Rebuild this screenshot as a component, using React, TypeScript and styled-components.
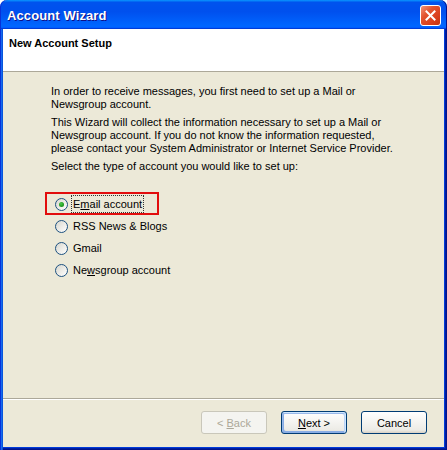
import React from "react";
import styled, { createGlobalStyle } from "styled-components";

const Global = createGlobalStyle`
  html, body { margin: 0; padding: 0; background: #ffffff; }
  body { font-family: "Liberation Sans", Arial, sans-serif; font-size: 11px; }
  * { box-sizing: border-box; }
`;

const Window = styled.div`
  width: 447px;
  height: 450px;
  display: flex;
  flex-direction: column;
`;

const TitleBar = styled.div`
  height: 29px;
  flex: 0 0 29px;
  display: flex;
  align-items: center;
  justify-content: space-between;
  padding: 0 6px 0 7px;
  border-radius: 7px 7px 0 0;
  background: linear-gradient(
    180deg,
    #0997ff,
    #0053ee 8%,
    #0050ee 40%,
    #06f 88%,
    #06f 93%,
    #005bff 95%,
    #003dd7 96%,
    #003dd7
  );
  box-shadow: inset 1px 0 #0831d9, inset -1px 0 #00138c;
`;

const Title = styled.span`
  color: #ffffff;
  font-family: "Liberation Sans", Arial, sans-serif;
  font-weight: bold;
  font-size: 13px;
  letter-spacing: 0.1px;
  text-shadow: 1px 1px #0f1089;
  margin-top: 1px;
`;

const CloseButton = styled.div`
  width: 21px;
  height: 21px;
  margin-top: 1px;
  border: 1px solid #ffffff;
  border-radius: 3px;
  background: linear-gradient(135deg, #f3947a 0%, #e2532f 35%, #d93f1d 70%, #c3330f 100%);
  display: flex;
  align-items: center;
  justify-content: center;
`;

const Frame = styled.div`
  flex: 1;
  display: flex;
  flex-direction: column;
  padding: 0 3px 3px 3px;
  background: #ece9d8;
  box-shadow: inset 1px 0 #0831d9, inset 2px 0 #166aee, inset 3px 0 #0855dd,
    inset -1px -1px #00138c, inset -2px -2px #001ea0, inset -3px -3px #003bda;
`;

const Header = styled.div`
  height: 43px;
  flex: 0 0 43px;
  background: #ffffff;
  border-bottom: 1px solid #aca899;
  padding: 8px 0 0 6px;
`;

const HeaderTitle = styled.div`
  font-weight: bold;
  font-size: 11px;
  line-height: 13px;
  color: #000;
`;

const Content = styled.div`
  flex: 1;
  display: flex;
  flex-direction: column;
  padding: 13px 0 0 48px;
  color: #000;
`;

const Para = styled.p<{ $gap?: number }>`
  margin: ${(p) => p.$gap ?? 0}px 0 0 0;
  line-height: 13px;
  font-size: 11px;
`;

const RadioList = styled.div`
  display: flex;
  flex-direction: column;
  margin-top: 20px;
`;

const RadioRow = styled.div`
  position: relative;
  height: 22px;
  display: flex;
  align-items: center;
`;

const Highlight = styled.div`
  position: absolute;
  left: -6px;
  top: -1px;
  width: 114px;
  height: 23px;
  border: 2px solid #e20d0d;
  pointer-events: none;
`;

const RadioCircle = styled.span<{ $checked?: boolean }>`
  width: 13px;
  height: 13px;
  margin-left: 4px;
  border-radius: 50%;
  border: 1px solid #1c5180;
  background: linear-gradient(135deg, #d6d6ce 0%, #ecebe6 50%, #ffffff 100%);
  display: flex;
  align-items: center;
  justify-content: center;
  &::after {
    content: "";
    display: ${(p) => (p.$checked ? "block" : "none")};
    width: 5px;
    height: 5px;
    border-radius: 50%;
    background: radial-gradient(circle at 40% 35%, #4cc94c, #1e9a1e 60%, #137f13);
  }
`;

const RadioLabel = styled.span<{ $focused?: boolean }>`
  margin-left: 3px;
  height: 18px;
  padding: 0 1px;
  display: flex;
  align-items: center;
  font-size: 11px;
  border: 1px dotted ${(p) => (p.$focused ? "#333" : "transparent")};
  u {
    text-decoration: underline;
  }
`;

const Separator = styled.div`
  height: 2px;
  flex: 0 0 2px;
  border-top: 1px solid #aca899;
  border-bottom: 1px solid #ffffff;
`;

const ButtonBar = styled.div`
  flex: 0 0 47px;
  display: flex;
  justify-content: flex-end;
  align-items: flex-start;
  gap: 14px;
  padding: 11px 17px 0 0;
`;

const Button = styled.button<{ $default?: boolean }>`
  width: 66px;
  height: 23px;
  padding: 0;
  font-family: "Liberation Sans", Arial, sans-serif;
  font-size: 11px;
  color: #000;
  border: 1px solid #003c74;
  border-radius: 3px;
  background: linear-gradient(180deg, #ffffff, #ecebe5 86%, #d8d0c4);
  box-shadow: ${(p) =>
    p.$default
      ? "inset -1px 1px #cee7ff, inset 1px 2px #98b8ea, inset -2px 2px #bcd4f6, inset 1px -1px #89ade4, inset 2px -2px #89ade4"
      : "none"};
  &:disabled {
    background: #f4f4f0;
    border-color: #c9c7ba;
    color: #aca899;
  }
  u {
    text-decoration: underline;
  }
`;

const options = [
  { key: "email", label: <>E<u>m</u>ail account</>, checked: true },
  { key: "rss", label: <>RSS News &amp; Blogs</> },
  { key: "gmail", label: <>Gmail</> },
  { key: "news", label: <>Ne<u>w</u>sgroup account</> },
];

export default function App() {
  return (
    <>
      <Global />
      <Window>
        <TitleBar>
          <Title>Account Wizard</Title>
          <CloseButton>
            <svg width="11" height="11" viewBox="0 0 11 11">
              <path d="M1.5 1.5 L9.5 9.5 M9.5 1.5 L1.5 9.5" stroke="#fff" strokeWidth="2" strokeLinecap="square" />
            </svg>
          </CloseButton>
        </TitleBar>
        <Frame>
          <Header>
            <HeaderTitle>New Account Setup</HeaderTitle>
          </Header>
          <Content>
            <Para>
              In order to receive messages, you first need to set up a Mail or
              <br />
              Newsgroup account.
            </Para>
            <Para $gap={5}>
              This Wizard will collect the information necessary to set up a Mail or
              <br />
              Newsgroup account. If you do not know the information requested,
              <br />
              please contact your System Administrator or Internet Service Provider.
            </Para>
            <Para $gap={5}>Select the type of account you would like to set up:</Para>
            <RadioList>
              {options.map((o) => (
                <RadioRow key={o.key}>
                  {o.checked && <Highlight />}
                  <RadioCircle $checked={o.checked} />
                  <RadioLabel $focused={o.checked}>{o.label}</RadioLabel>
                </RadioRow>
              ))}
            </RadioList>
          </Content>
          <Separator />
          <ButtonBar>
            <Button disabled>
              &lt; <u>B</u>ack
            </Button>
            <Button $default>
              <u>N</u>ext &gt;
            </Button>
            <Button>Cancel</Button>
          </ButtonBar>
        </Frame>
      </Window>
    </>
  );
}
